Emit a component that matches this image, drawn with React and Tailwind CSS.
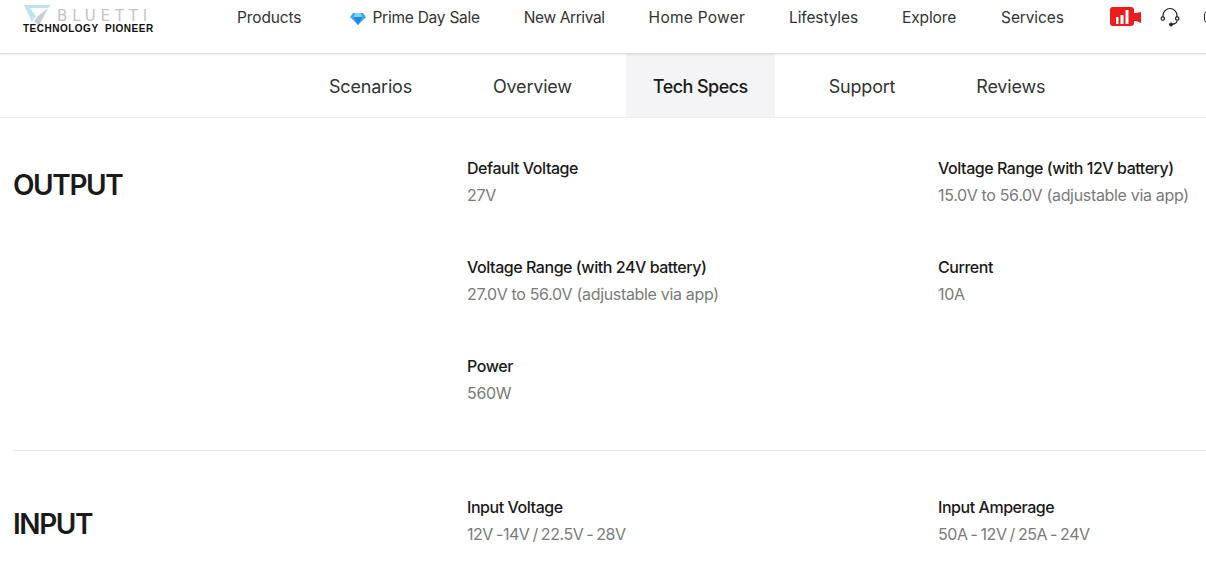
import React from "react";

const nav = [
  ["New Arrival", "tracking-[-0.4px]"],
  ["Home Power", "tracking-[0.25px]"],
  ["Lifestyles", "tracking-[-0.12px]"],
  ["Explore", "tracking-[-0.12px]"],
  ["Services", "tracking-[-0.12px] ml-[1px]"],
];
const tabs = ["Scenarios", "Overview", "Tech Specs", "Support", "Reviews"];

function Spec({ title, value, tight }) {
  return (
    <div className="h-[99px]">
      <div className="text-[16px] leading-[24px] font-medium text-[#1a1a1a] tracking-[-0.45px]">{title}</div>
      <div
        className={
          tight
            ? "mt-[3px] text-[16px] leading-[24px] text-[#7a7a7a] tracking-[-0.45px] [word-spacing:-1px] whitespace-nowrap"
            : "mt-[3px] text-[16px] leading-[24px] text-[#7a7a7a] tracking-[-0.33px] whitespace-nowrap"
        }
      >
        {value}
      </div>
    </div>
  );
}

function Section({ name, specs }) {
  return (
    <section className="flex">
      <h2 className="w-[454px] shrink-0 text-[28px] leading-[36px] font-semibold text-[#1a1a1a] pt-[11px] tracking-[-1.4px]">{name}</h2>
      <div className="grid grid-cols-[471px_300px] shrink-0">
        {specs.map((s) => (
          <Spec key={s[0]} title={s[0]} value={s[1]} tight={s[2]} />
        ))}
      </div>
    </section>
  );
}

export default function App() {
  return (
    <div className="h-[569px] w-[1206px] overflow-hidden bg-white font-['Inter','Liberation_Sans',sans-serif]">
      <header className="h-[54px] flex items-start border-b border-[#dcdcdc] shadow-[0_1px_2px_rgba(0,0,0,0.08)] relative z-10 bg-white">
        <div className="w-[237px] shrink-0 pl-[23px] pt-[5px]">
          <div className="flex items-end h-[18px]">
            <svg width="28" height="22" viewBox="0 0 28 22" className="shrink-0 self-start">
              <path d="M1 0H28L25 3H7L13 11L9 17Z" fill="#bfe3f2" />
              <path d="M15 11L25 3L16 21L11 16Z" fill="#c9ced2" />
            </svg>
            <span className="ml-[6px] text-[15px] leading-[14px] text-[#c4c4c4] font-normal tracking-[4.9px] font-['DejaVu_Sans',sans-serif] whitespace-nowrap">BLUETTI</span>
          </div>
          <div className="mt-[1px] text-[10px] leading-[10px] font-bold text-[#111] tracking-[0.5px] font-['Liberation_Sans',sans-serif] whitespace-nowrap">
            TECHNOLOGY&nbsp; PIONEER
          </div>
        </div>
        <nav className="flex items-center gap-[44px] h-[36px] text-[15.5px] text-[#333] tracking-[-0.12px] whitespace-nowrap">
          <span className="mr-[5px]">Products</span>
          <span className="flex items-center gap-[6px] tracking-[-0.25px]">
            <svg width="16" height="13" viewBox="0 0 16 13">
              <path d="M3 1H13L16 5L8 13L0 5Z" fill="#3aa6f0" />
              <path d="M5 1H11L12 5H4Z" fill="#7fd0fb" />
              <path d="M4 5H12L8 13Z" fill="#1f86e0" />
            </svg>
            Prime Day Sale
          </span>
          {nav.map(([n, c]) => (
            <span key={n} className={c}>{n}</span>
          ))}
        </nav>
        <div className="flex items-center h-[33px] ml-[46px] shrink-0">
          <svg width="31" height="19" viewBox="0 0 31 19">
            <rect x="0" y="0" width="24" height="19" rx="3" fill="#ee1c1c" />
            <path d="M23 6H26L31 5V16L26 14H23Z" fill="#ee1c1c" />
            <rect x="6" y="10" width="2.5" height="7" fill="#fff" />
            <rect x="10.5" y="8" width="3" height="9" fill="#fff" />
            <rect x="15.5" y="3" width="3" height="14" fill="#fff" />
          </svg>
          <svg width="20" height="20" viewBox="0 0 20 20" fill="none" stroke="#222" strokeWidth="1.2" className="ml-[19px]">
            <path d="M3 10V8.5a7 7 0 0 1 14 0V10" />
            <circle cx="2.8" cy="11.5" r="1.7" />
            <circle cx="17.2" cy="11.5" r="1.7" />
            <path d="M17 13.5c0 2-2 3.5-5 3.8" />
            <circle cx="11" cy="17.5" r="1.3" fill="#222" />
          </svg>
          <div className="ml-[24px] w-[10px] h-[14px] rounded-full border-[1.5px] border-[#222] shrink-0" />
        </div>
      </header>

      <div className="h-[64px] border-b border-[#eeeeee] text-[18px] text-[#333] pl-[302px] flex gap-[27px] tracking-[-0.2px]">
        {tabs.map((t) => (
          <div
            key={t}
            className={
              t === "Tech Specs"
                ? "pt-[1px] px-[27px] flex items-center bg-[#f4f4f6] font-medium text-[#1a1a1a] tracking-[-0.55px]"
                : "pt-[1px] px-[27px] flex items-center"
            }
          >
            {t}
          </div>
        ))}
      </div>

      <main className="pl-[13px] pt-[38px]">
        <Section
          name="OUTPUT"
          specs={[
            ["Default Voltage", "27V"],
            ["Voltage Range (with 12V battery)", "15.0V to 56.0V (adjustable via app)"],
            ["Voltage Range (with 24V battery)", "27.0V to 56.0V (adjustable via app)"],
            ["Current", "10A"],
            ["Power", "560W"],
          ]}
        />
        <div className="h-px bg-[#e8e8e8] mt-[-3px] mb-[44px]" />
        <Section
          name="INPUT"
          specs={[
            ["Input Voltage", "12V -14V / 22.5V - 28V", true],
            ["Input Amperage", "50A - 12V / 25A - 24V", true],
          ]}
        />
      </main>
    </div>
  );
}
